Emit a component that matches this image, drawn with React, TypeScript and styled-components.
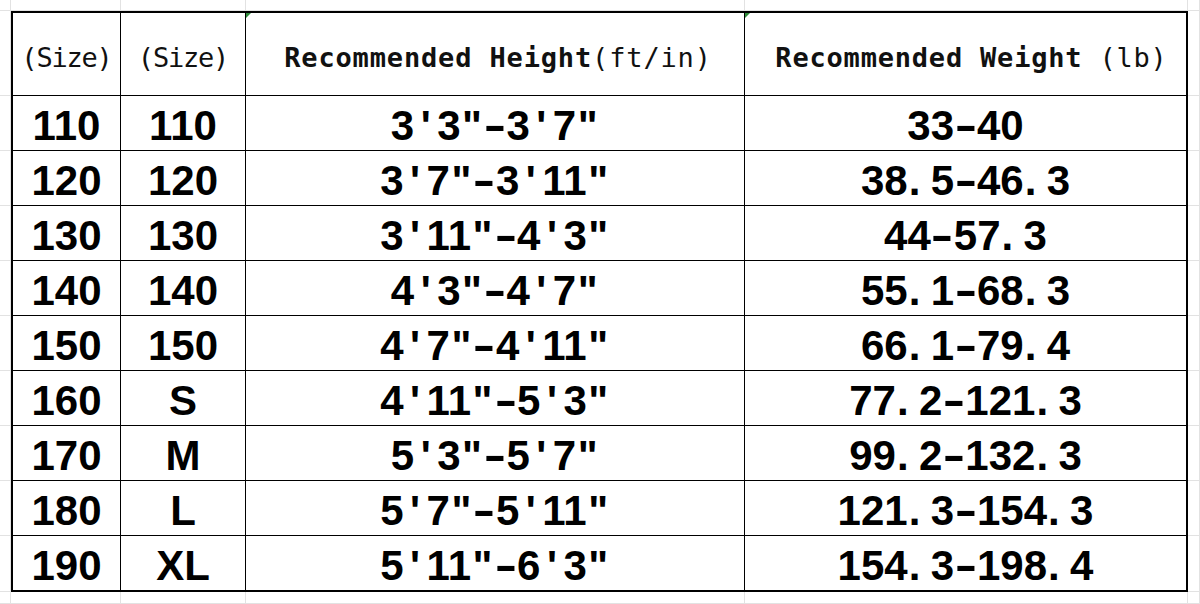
import styled, { createGlobalStyle } from 'styled-components';

const GlobalStyle = createGlobalStyle`
  html, body {
    margin: 0;
    padding: 0;
    background: #ffffff;
  }
  body {
    width: 1200px;
    height: 604px;
    overflow: hidden;
  }
`;

type Row = [string, string, string, string];

const rows: Row[] = [
  ['110', '110', `3'3"-3'7"`, '33-40'],
  ['120', '120', `3'7"-3'11"`, '38.5-46.3'],
  ['130', '130', `3'11"-4'3"`, '44-57.3'],
  ['140', '140', `4'3"-4'7"`, '55.1-68.3'],
  ['150', '150', `4'7"-4'11"`, '66.1-79.4'],
  ['160', 'S', `4'11"-5'3"`, '77.2-121.3'],
  ['170', 'M', `5'3"-5'7"`, '99.2-132.3'],
  ['180', 'L', `5'7"-5'11"`, '121.3-154.3'],
  ['190', 'XL', `5'11"-6'3"`, '154.3-198.4'],
];

// spreadsheet grid, the table sits over columns 2-5 / rows 2-11
const Sheet = styled.div`
  display: grid;
  width: 1200px;
  height: 604px;
  grid-template-columns: 11px 110px 125px 499px 443px 1fr;
  grid-template-rows: 11px 85px repeat(8, 55px) 56px 1fr;
`;

const GutterCell = styled.div`
  box-sizing: border-box;
  border-right: 1px solid #e2e2e2;
  border-bottom: 1px solid #e2e2e2;
`;

const Table = styled.div`
  grid-column: 2 / 6;
  grid-row: 2 / 12;
  box-sizing: border-box;
  border: 2px solid #000;
  background: #fff;
  display: grid;
  grid-template-columns: 108px 125px 499px 1fr;
  grid-template-rows: 83px repeat(8, 55px) 1fr;
`;

const Cell = styled.div<{ $lastCol?: boolean; $lastRow?: boolean; $flag?: boolean; $shift?: number }>`
  position: relative;
  box-sizing: border-box;
  display: flex;
  align-items: center;
  justify-content: center;
  padding-top: 6px;
  padding-left: ${(p) => (p.$shift ?? 0) * 2}px;
  border-right: ${(p) => (p.$lastCol ? 'none' : '1px solid #000')};
  border-bottom: ${(p) => (p.$lastRow ? 'none' : '1px solid #000')};
  white-space: nowrap;

  &::before {
    content: '';
    display: ${(p) => (p.$flag ? 'block' : 'none')};
    position: absolute;
    top: 0;
    left: 0;
    border-top: 5px solid #2e8b3a;
    border-right: 5px solid transparent;
  }
`;

const HeadText = styled.span<{ $spacing: number }>`
  font-family: 'DejaVu Sans Mono', 'Liberation Mono', monospace;
  font-size: 27px;
  letter-spacing: ${(p) => p.$spacing}px;
  color: #111;
  font-weight: 400;
`;

const Bold = styled.span`
  font-weight: 700;
`;

const DataText = styled.span`
  display: inline-flex;
  align-items: baseline;
  font-family: 'Liberation Sans', Arial, sans-serif;
  font-weight: 700;
  font-size: 42px;
  line-height: 1;
  color: #000;
`;

// punctuation sits in a half-em cell, like the sheet's CJK font does
const Punct = styled.span<{ $dot?: boolean }>`
  display: inline-flex;
  width: 23px;
  justify-content: ${(p) => (p.$dot ? 'flex-start' : 'center')};
  padding-left: ${(p) => (p.$dot ? '1px' : '0')};
  box-sizing: border-box;
`;

const Dash = styled.span`
  display: inline-block;
  transform: scaleX(1.6);
`;

function Mono({ text }: { text: string }) {
  const parts = text.match(/[A-Za-z0-9]+|[^A-Za-z0-9]/g) ?? [];
  return (
    <DataText>
      {parts.map((part, i) => {
        if (part === '-')
          return (
            <Punct key={i}>
              <Dash>-</Dash>
            </Punct>
          );
        if (part === '.')
          return (
            <Punct key={i} $dot>
              .
            </Punct>
          );
        if (part === "'" || part === '"') return <Punct key={i}>{part}</Punct>;
        return <span key={i}>{part}</span>;
      })}
    </DataText>
  );
}

export default function App() {
  const gutters = Array.from({ length: 32 });

  return (
    <>
      <GlobalStyle />
      <Sheet>
        {gutters.map((_, i) => (
          <GutterCell key={i} />
        ))}
        <Table>
          <Cell>
            <HeadText $spacing={-1.2}>(Size)</HeadText>
          </Cell>
          <Cell>
            <HeadText $spacing={-1.2}>(Size)</HeadText>
          </Cell>
          <Cell $flag $shift={3}>
            <HeadText $spacing={0.85}>
              <Bold>Recommended Height</Bold>(ft/in)
            </HeadText>
          </Cell>
          <Cell $flag $lastCol $shift={6}>
            <HeadText $spacing={0.8}>
              <Bold>Recommended Weight</Bold> (lb)
            </HeadText>
          </Cell>

          {rows.map((r, ri) =>
            r.map((val, ci) => (
              <Cell key={`${ri}-${ci}`} $lastCol={ci === 3} $lastRow={ri === rows.length - 1}>
                <Mono text={val} />
              </Cell>
            ))
          )}
        </Table>
      </Sheet>
    </>
  );
}
